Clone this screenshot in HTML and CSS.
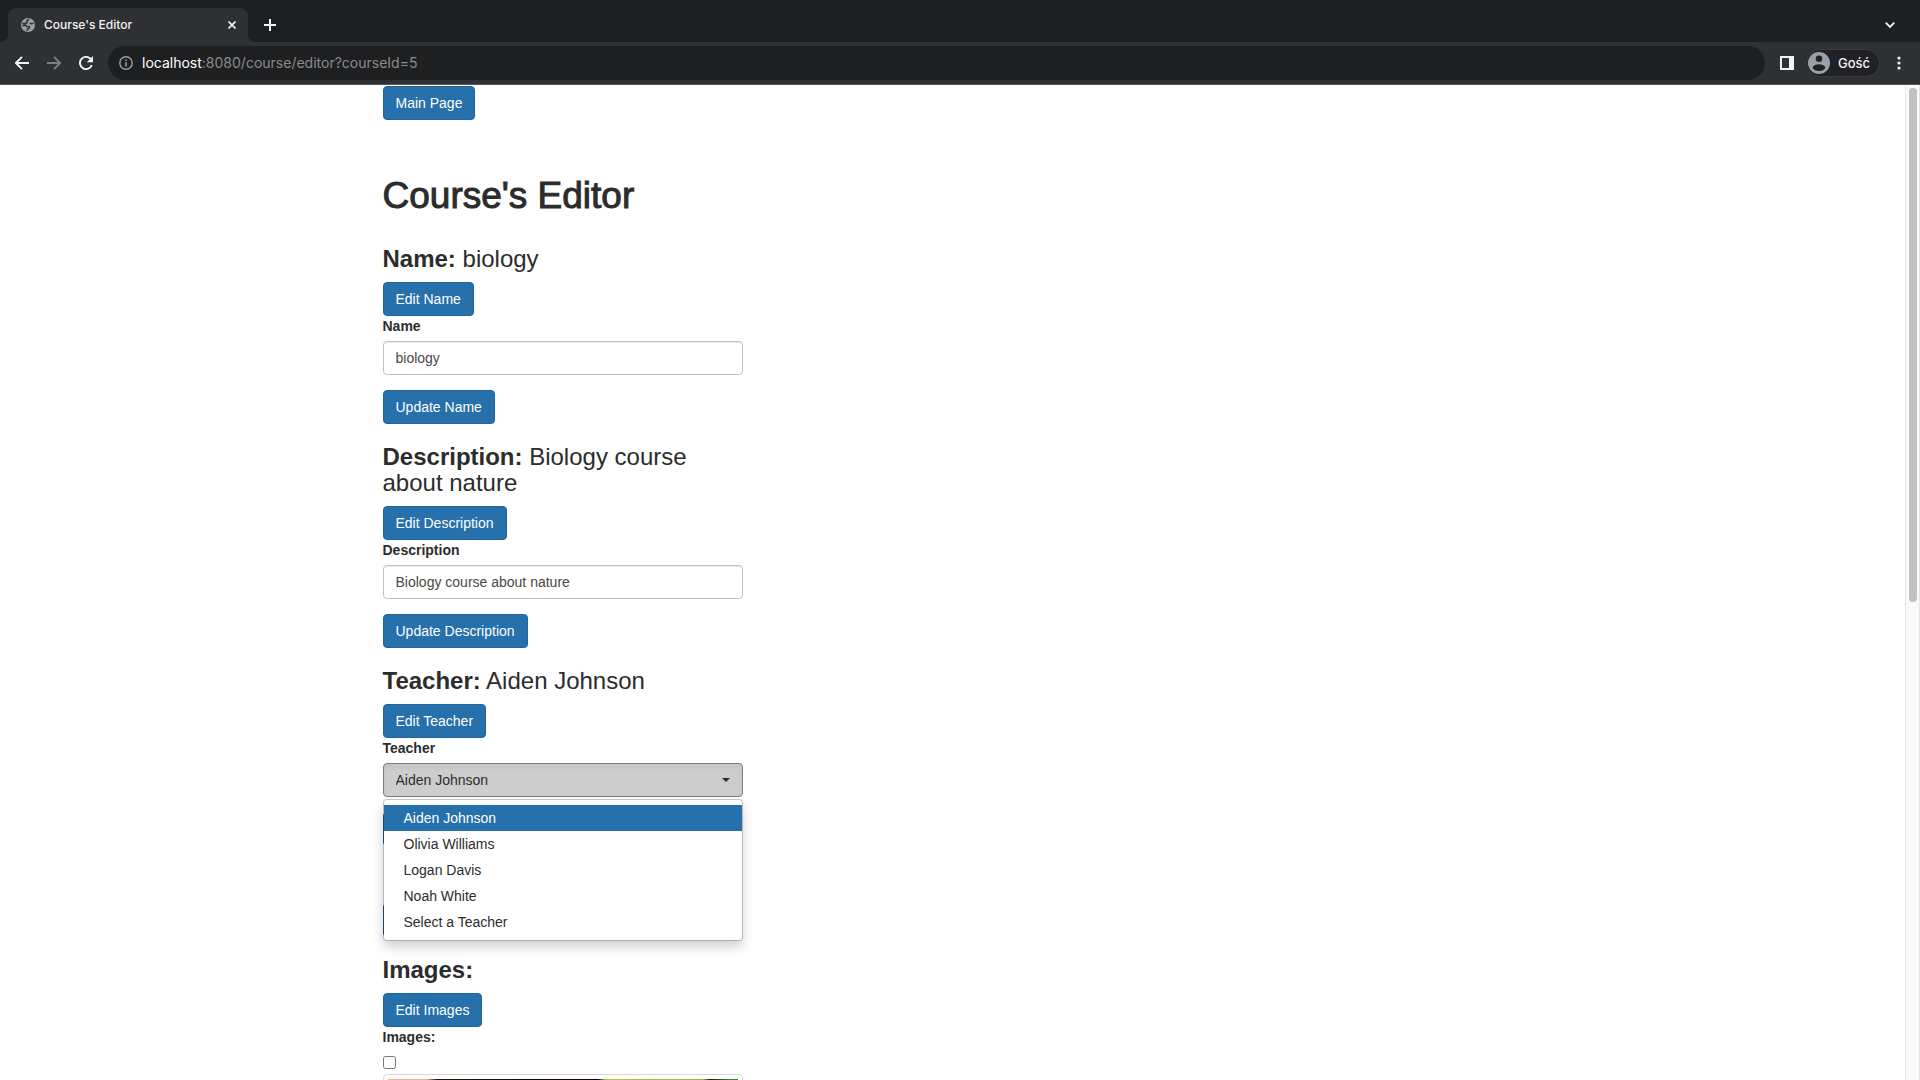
FILE: index.html
```html
<!DOCTYPE html>
<html lang="en">
<head>
<meta charset="utf-8">
<meta name="viewport" content="width=device-width, initial-scale=1">
<title>Course's Editor</title>
<link rel="stylesheet" href="styles.css">
</head>
<body>
<header class="browser">
  <div class="tabstrip">
    <div class="tab">
      <svg class="tab-icon" viewBox="0 0 14 14" aria-hidden="true"><circle cx="7" cy="7" r="7" fill="#9aa0a6"/><path d="M8.2 1.2 5.8 2.8 6.2 4.4 4.4 5.6 1.4 5.2M1.2 7.4 4.6 7.3 6 8.6 8.4 8.8 8 10.5 6.3 11.2 6.3 12.8M12.6 5.3 10.2 5.8 8.6 5.2" fill="none" stroke="#2f3033" stroke-width="1.5"/></svg>
      <span class="tab-title">Course's Editor</span>
      <button class="icon-btn tab-close" aria-label="Close tab"><svg width="8" height="8" viewBox="0 0 8 8"><path d="M.5.5l7 7M7.5.5l-7 7" stroke="#f1f3f4" stroke-width="1.6"/></svg></button>
    </div>
    <button class="icon-btn new-tab" aria-label="New tab"><svg width="12" height="12" viewBox="0 0 12 12"><path d="M6 0v12M0 6h12" stroke="#f1f3f4" stroke-width="2"/></svg></button>
    <button class="icon-btn tab-search" aria-label="Search tabs"><svg width="10" height="6" viewBox="0 0 10 6"><path d="M.7.7 5 5 9.3.7" fill="none" stroke="#f1f3f4" stroke-width="1.8"/></svg></button>
  </div>
  <div class="toolbar">
    <div class="nav">
      <button class="icon-btn" aria-label="Back"><svg width="14" height="14" viewBox="0 0 14 14"><path d="M14 7H1.5M7 .8.9 7 7 13.2" fill="none" stroke="#f1f3f4" stroke-width="1.9"/></svg></button>
      <button class="icon-btn" aria-label="Forward"><svg width="14" height="14" viewBox="0 0 14 14"><path d="M0 7h12.5M7 .8 13.1 7 7 13.2" fill="none" stroke="#7c7f82" stroke-width="1.9"/></svg></button>
      <button class="icon-btn" aria-label="Reload"><svg width="14" height="14" viewBox="0 0 14 14"><path d="M12.8 9A6.1 6.1 0 1 1 11.4 2.7L12.6 4" fill="none" stroke="#f1f3f4" stroke-width="1.9"/><path d="M14 0v6.2H7.8z" fill="#f1f3f4"/></svg></button>
    </div>
    <div class="omnibox">
      <svg width="14" height="14" viewBox="0 0 14 14" aria-hidden="true"><circle cx="7" cy="7" r="6.2" fill="none" stroke="#9aa0a6" stroke-width="1.4"/><path d="M7 6v4.5M7 3.5v1.5" stroke="#9aa0a6" stroke-width="1.5"/></svg>
      <span class="url"><span class="url-host">localhost</span>:8080/course/editor?courseId=5</span>
    </div>
    <button class="icon-btn side-panel" aria-label="Side panel"><svg width="14" height="14" viewBox="0 0 14 14"><path fill="#f1f3f4" fill-rule="evenodd" d="M0 0h14v14H0zM2 2v10h7V2z"/></svg></button>
    <button class="profile"><svg width="22" height="22" viewBox="0 0 22 22" aria-hidden="true"><circle cx="11" cy="11" r="11" fill="#9aa0a6"/><circle cx="11" cy="6.8" r="3.3" fill="#202124"/><ellipse cx="11" cy="15.6" rx="6.2" ry="3.4" fill="#202124"/></svg>Gość</button>
    <button class="icon-btn" aria-label="Menu"><svg width="4" height="14" viewBox="0 0 4 14" fill="#f1f3f4"><circle cx="2" cy="2" r="1.6"/><circle cx="2" cy="7" r="1.6"/><circle cx="2" cy="12" r="1.6"/></svg></button>
  </div>
</header>
<div class="viewport">
  <main class="page">
    <div class="container">
      <a class="btn" href="#">Main Page</a>
      <h1>Course's Editor</h1>
      <div class="column">
        <h3><strong>Name:</strong> biology</h3>
        <button class="btn">Edit Name</button>
        <form class="form">
          <label for="name">Name</label>
          <input class="control" id="name" type="text" value="biology">
          <button class="btn" type="button">Update Name</button>
        </form>
        <h3><strong>Description:</strong> Biology course about nature</h3>
        <button class="btn">Edit Description</button>
        <form class="form">
          <label for="description">Description</label>
          <input class="control" id="description" type="text" value="Biology course about nature">
          <button class="btn" type="button">Update Description</button>
        </form>
        <h3><strong>Teacher:</strong> Aiden Johnson</h3>
        <button class="btn">Edit Teacher</button>
        <form class="form">
          <label for="teacher">Teacher</label>
          <div class="picker">
            <select class="control picker-select" id="teacher">
              <option selected>Aiden Johnson</option>
              <option>Olivia Williams</option>
              <option>Logan Davis</option>
              <option>Noah White</option>
              <option>Select a Teacher</option>
            </select>
            <span class="caret"></span>
            <ul class="menu">
              <li><a class="active" href="#">Aiden Johnson</a></li>
              <li><a href="#">Olivia Williams</a></li>
              <li><a href="#">Logan Davis</a></li>
              <li><a href="#">Noah White</a></li>
              <li><a href="#">Select a Teacher</a></li>
            </ul>
          </div>
          <button class="btn btn-covered" type="button" aria-label="Update Teacher"></button>
        </form>
        <div class="covered-section">
          <button class="btn btn-covered" aria-label="Edit"></button>
        </div>
        <h3><strong>Images:</strong></h3>
        <button class="btn">Edit Images</button>
        <form class="form">
          <label for="image">Images:</label>
          <input class="check" id="image" type="checkbox">
          <div class="thumbnail"><div class="photo"></div></div>
        </form>
      </div>
    </div>
  </main>
  <div class="scrollbar"><div class="thumb"></div></div>
</div>
</body>
</html>
```
FILE: styles.css
```css
* { box-sizing: border-box; }

body {
  margin: 0;
  height: 100vh;
  display: flex;
  flex-direction: column;
  overflow: hidden;
  background: #fff;
  color: #2c2c2c;
  font: 14px/20px "Liberation Sans", Arial, sans-serif;
}

/* Browser frame */
.browser {
  flex: none;
  background: #2f3033;
  border-bottom: 1px solid #55565a;
  font-family: Inter, sans-serif;
  color: #f1f3f4;
}

.icon-btn {
  display: flex;
  padding: 0;
  border: 0;
  background: none;
}

.tabstrip {
  display: flex;
  align-items: center;
  height: 42px;
  padding: 8px 25px 0 8px;
  background: #1e1f21;
}

.tab {
  position: relative;
  display: flex;
  align-items: center;
  width: 240px;
  height: 34px;
  padding: 0 12px 0 13px;
  border-radius: 8px 8px 0 0;
  background: #2f3033;
}

.tab::before,
.tab::after {
  content: "";
  position: absolute;
  bottom: 0;
  width: 8px;
  height: 8px;
}

.tab::before {
  left: -8px;
  background: radial-gradient(circle at 0 0, #1e1f21 8px, #2f3033 8px);
}

.tab::after {
  right: -8px;
  background: radial-gradient(circle at 100% 0, #1e1f21 8px, #2f3033 8px);
}

.tab-icon { width: 14px; height: 14px; margin-right: 9px; }
.tab-title { flex: 1; font-size: 12px; font-weight: 500; }
.new-tab { margin-left: 16px; }
.tab-search { margin-left: auto; }

.toolbar {
  display: flex;
  align-items: center;
  height: 42px;
  padding: 0 19px 0 15px;
}

.nav { display: flex; gap: 18px; margin-right: 15px; }

.omnibox {
  flex: 1;
  display: flex;
  align-items: center;
  gap: 9px;
  height: 34px;
  padding-left: 11px;
  border-radius: 17px;
  background: #1e1f21;
}

.url { font-size: 14px; color: #8a8b8d; }
.url-host { color: #fff; }
.side-panel { margin: 0 12px 0 15px; }

.profile {
  display: flex;
  align-items: center;
  gap: 8px;
  height: 28px;
  margin-right: 17px;
  padding: 0 9px 0 1px;
  border: 1px solid #3a3b3e;
  border-radius: 14px;
  background: #202124;
  color: #f1f3f4;
  font: 500 13px/20px Inter, sans-serif;
}

/* Document */
.viewport { flex: 1; display: flex; min-height: 0; }
.page { flex: 1; overflow: hidden; padding-top: 1px; }
.container { max-width: 1170px; margin: 0 auto; padding: 0 15px; }
.column { max-width: 360px; }

h1 {
  margin: 56px 0 30px;
  font-size: 37px;
  line-height: 40px;
  font-weight: 500;
  -webkit-text-stroke: 1px currentColor;
}

h3 { margin: 20px 0 10px; font-size: 24px; line-height: 26px; font-weight: 500; }

.btn {
  display: block;
  width: fit-content;
  height: 34px;
  padding: 6px 12px;
  border: 1px solid #1f659e;
  border-radius: 4px;
  background: #2670ab;
  color: #fff;
  font: inherit;
  text-decoration: none;
}

.btn-covered { width: 124px; }
.covered-section { padding-top: 57px; }

label { display: block; margin-bottom: 5px; font-weight: 700; }

.control {
  display: block;
  width: 100%;
  height: 34px;
  margin-bottom: 15px;
  padding: 6px 12px;
  border: 1px solid #c2c2c2;
  border-radius: 4px;
  background: #fff;
  box-shadow: inset 0 1px 1px rgba(0, 0, 0, .075);
  color: #484848;
  font: inherit;
}

.picker { position: relative; }

.picker-select {
  appearance: none;
  border-color: #7f7f7f;
  background: #cdcdcd;
  box-shadow: inset 0 3px 5px rgba(0, 0, 0, .05);
  color: #2c2c2c;
}

.caret {
  position: absolute;
  top: 15px;
  right: 13px;
  border: 4px solid transparent;
  border-top-color: #2c2c2c;
  border-bottom: 0;
}

.menu {
  position: absolute;
  top: 100%;
  left: 0;
  z-index: 1;
  width: 100%;
  margin: 2px 0 0;
  padding: 5px 0;
  border: 1px solid rgba(0, 0, 0, .2);
  border-radius: 4px;
  background: #fff;
  background-clip: padding-box;
  box-shadow: 0 6px 12px rgba(0, 0, 0, .18);
  list-style: none;
}

.menu a {
  display: block;
  padding: 3px 20px;
  color: #2c2c2c;
  text-decoration: none;
}

.menu a.active { background: #2670ab; color: #fff; }

.check { display: block; width: 13px; height: 13px; margin: 9px 0 5px; }

.thumbnail {
  padding: 4px;
  border: 1px solid #d8d8d8;
  border-radius: 4px;
}

.photo {
  height: 240px;
  background: linear-gradient(90deg, #f0b496 0 11%, #1c1a12 14%, #120a12 40%, #0c0408 60%, #a8cc40 62%, #8fc03c 90%, #182010 92%, #3c8030 97%);
}

/* Scroll track beside the document */
.scrollbar {
  flex: none;
  width: 15px;
  padding: 3px 2px 3px 3px;
  border: solid #e6e6e6;
  border-width: 0 1px;
  background: #fafafa;
}

.thumb {
  width: 8px;
  height: 52%;
  border-radius: 4px;
  background: #c1c1c1;
}
```
